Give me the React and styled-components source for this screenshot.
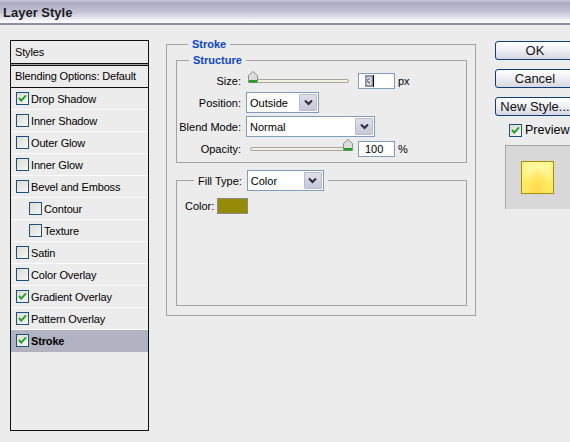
import React from 'react';
import styled, { createGlobalStyle } from 'styled-components';

const GlobalStyle = createGlobalStyle`
  html, body {
    margin: 0;
    padding: 0;
    background: #ececec;
    overflow: hidden;
  }
  body {
    width: 570px;
    height: 442px;
    font-family: "Liberation Sans", Arial, sans-serif;
    font-size: 11px;
    color: #000;
  }
`;

const styles = [
  { label: 'Drop Shadow', checked: true },
  { label: 'Inner Shadow' },
  { label: 'Outer Glow' },
  { label: 'Inner Glow' },
  { label: 'Bevel and Emboss' },
  { label: 'Contour', indent: true },
  { label: 'Texture', indent: true },
  { label: 'Satin' },
  { label: 'Color Overlay' },
  { label: 'Gradient Overlay', checked: true },
  { label: 'Pattern Overlay', checked: true },
  { label: 'Stroke', checked: true, active: true }
];

const Check = ({ checked }) => (
  <Box>
    {checked ? (
      <svg width="11" height="11" viewBox="0 0 11 11">
        <path d="M2 5 L4.3 7.6 L9 2.4" fill="none" stroke="#21a121" strokeWidth="2" />
      </svg>
    ) : null}
  </Box>
);

const Thumb = () => (
  <svg width="10" height="12" viewBox="0 0 10 12">
    <path d="M0.5 11.5 V4.5 L5 0.5 L9.5 4.5 V11.5 Z" fill="#dcdcd8" stroke="#8a8f8a" />
    <rect x="1" y="9" width="8" height="2.5" fill="#21a121" />
  </svg>
);

const Slider = ({ value }) => (
  <SliderTrack>
    <ThumbHolder style={{ left: `${value * 0.95}px` }}>
      <Thumb />
    </ThumbHolder>
  </SliderTrack>
);

const Chevron = () => (
  <svg width="9" height="7" viewBox="0 0 9 7">
    <path d="M1 1.5 L4.5 5 L8 1.5" fill="none" stroke="#2a2a40" strokeWidth="2" />
  </svg>
);

const Select = ({ value, width }) => (
  <SelectBox $width={width}>
    <SelectValue>{value}</SelectValue>
    <SelectButton>
      <Chevron />
    </SelectButton>
  </SelectBox>
);

const App = () => (
  <>
    <GlobalStyle />
    <TitleBar>Layer Style</TitleBar>
    <Body>
      <StylesPanel>
        <PanelHeader>Styles</PanelHeader>
        <BlendRow>Blending Options: Default</BlendRow>
        {styles.map(({ label, checked, indent, active }) => (
          <StyleRow key={label} $indent={indent} $active={active}>
            <Check checked={checked} />
            <span>{label}</span>
          </StyleRow>
        ))}
      </StylesPanel>

      <Middle>
        <Group>
          <Legend>Stroke</Legend>
          <Group $inner>
            <Legend>Structure</Legend>
            <FormGrid>
              <Label>Size:</Label>
              <Line>
                <Slider value={0} />
                <NumberBox>
                  <Selected>3</Selected>
                  <Caret />
                </NumberBox>
                <Unit>px</Unit>
              </Line>

              <Label>Position:</Label>
              <Line>
                <Select value="Outside" width={73} />
              </Line>

              <Label>Blend Mode:</Label>
              <Line>
                <Select value="Normal" width={129} />
              </Line>

              <Label>Opacity:</Label>
              <Line>
                <Slider value={100} />
                <NumberBox>100</NumberBox>
                <Unit>%</Unit>
              </Line>
            </FormGrid>
          </Group>

          <FillGroup>
            <FillLegend>
              <span>Fill Type:</span>
              <Select value="Color" width={77} />
            </FillLegend>
            <ColorRow>
              <span>Color:</span>
              <Swatch $color="#968b06" />
            </ColorRow>
          </FillGroup>
        </Group>
      </Middle>

      <Side>
        <Button>OK</Button>
        <Button>Cancel</Button>
        <Button>New Style...</Button>
        <PreviewToggle>
          <Check checked />
          <span>Preview</span>
        </PreviewToggle>
        <PreviewPane>
          <PreviewTile />
        </PreviewPane>
      </Side>
    </Body>
  </>
);

export default App;

const TitleBar = styled.div`
  height: 25px;
  box-sizing: border-box;
  padding: 5px 0 0 3px;
  font-size: 13px;
  font-weight: bold;
  color: #1c1c1c;
  background: linear-gradient(to bottom, #c9c9d9 0px, #a9a9c4 3px, #c4c4d6 12px, #f6f6fa 21px, #ffffff 23px);
  border-bottom: 2px solid #8d8dab;
`;

const Body = styled.div`
  display: flex;
  align-items: flex-start;
  padding: 15px 0 0 10px;

  & > * {
    flex: none;
  }
`;

const StylesPanel = styled.div`
  width: 137px;
  height: 389px;
  border: 1px solid #111;
  display: flex;
  flex-direction: column;
  letter-spacing: -0.15px;
`;

const PanelHeader = styled.div`
  height: 22px;
  line-height: 22px;
  padding-left: 4px;
  border-bottom: 1px solid #111;
  box-shadow: 0 1px 0 #a4a4a4, 0 2px 0 #111;
  margin-bottom: 2px;
`;

const BlendRow = styled.div`
  height: 21px;
  line-height: 21px;
  padding-left: 4px;
  border-bottom: 1px solid #111;
`;

const StyleRow = styled.div`
  height: 21px;
  display: flex;
  align-items: center;
  gap: 2px;
  padding-left: ${({ $indent }) => ($indent ? 18 : 5)}px;
  border-bottom: 1px solid ${({ $active }) => ($active ? '#b1b3c1' : '#fbfbfb')};
  background: ${({ $active }) => ($active ? '#b1b3c1' : 'transparent')};
  font-weight: ${({ $active }) => ($active ? 'bold' : 'normal')};
`;

const Box = styled.span`
  width: 11px;
  height: 11px;
  flex: none;
  border: 1px solid #1c5180;
  background: linear-gradient(135deg, #dcdcd4, #f6f6f2);
  display: inline-flex;
  align-items: center;
  justify-content: center;
`;

const Middle = styled.div`
  width: 310px;
  margin: -3px 0 0 17px;
`;

const Group = styled.fieldset`
  margin: ${({ $inner }) => ($inner ? '2px 0 0 0' : '0')};
  padding: ${({ $inner }) => ($inner ? '5px 0 5px 0' : '0 8px 9px 9px')};
  border: 1px solid #a2a2a2;
  min-width: 0;
`;

const Legend = styled.legend`
  margin-left: 12px;
  padding: 0 4px;
  font-weight: bold;
  color: #0a46d0;
  line-height: 14px;
`;

const FormGrid = styled.div`
  display: grid;
  grid-template-columns: 64px 1fr;
  grid-template-rows: 17px 21px 21px 17px;
  column-gap: 5px;
  row-gap: 3px;
`;

const Label = styled.div`
  text-align: right;
  align-self: center;
  white-space: nowrap;
`;

const Line = styled.div`
  display: flex;
  align-items: center;
`;

const SliderTrack = styled.div`
  position: relative;
  width: 97px;
  height: 2px;
  margin: 0 9px 0 4px;
  background: #f3f1e4;
  border: 1px solid #a6a6a0;
  border-radius: 2px;
`;

const ThumbHolder = styled.span`
  position: absolute;
  top: -9px;
  margin-left: -3px;
  display: block;
  line-height: 0;
`;

const NumberBox = styled.div`
  width: 37px;
  height: 16px;
  box-sizing: border-box;
  border: 1px solid #7f9db9;
  background: #fff;
  padding-left: 6px;
  display: flex;
  align-items: center;
`;

const Selected = styled.span`
  background: #8f8fa8;
  color: #fff;
  line-height: 12px;
  padding: 0 1px;
`;

const Caret = styled.span`
  width: 1px;
  height: 12px;
  background: #000;
`;

const Unit = styled.span`
  margin-left: 3px;
`;

const SelectBox = styled.div`
  width: ${({ $width }) => $width}px;
  height: 21px;
  box-sizing: border-box;
  border: 1px solid #7f9db9;
  background: #fff;
  display: flex;
  align-items: stretch;
`;

const SelectValue = styled.div`
  flex: 1;
  padding-left: 3px;
  display: flex;
  align-items: center;
  font-size: 11px;
`;

const SelectButton = styled.div`
  width: 16px;
  margin: 1px;
  border: 1px solid #b8bccc;
  border-radius: 1px;
  background: linear-gradient(to bottom, #e0e0ea, #c6c8d8);
  display: flex;
  align-items: center;
  justify-content: center;
`;

const FillGroup = styled.fieldset`
  margin: 7px 0 0 0;
  padding: 7px 0 0 8px;
  height: 136px;
  box-sizing: border-box;
  border: 1px solid #a2a2a2;
  min-width: 0;
`;

const FillLegend = styled.legend`
  margin-left: 9px;
  padding: 0 4px;
  display: flex;
  align-items: center;
  gap: 5px;
`;

const ColorRow = styled.div`
  display: flex;
  align-items: center;
  gap: 3px;
`;

const Swatch = styled.div`
  width: 29px;
  height: 14px;
  border: 1px solid #8a8a8a;
  background: ${({ $color }) => $color};
`;

const Side = styled.div`
  margin-left: 19px;
  margin-top: 1px;
  display: flex;
  flex-direction: column;
  align-items: flex-start;
`;

const Button = styled.div`
  width: 80px;
  height: 19px;
  box-sizing: border-box;
  margin-bottom: 9px;
  border: 1px solid #0f3d73;
  border-radius: 3px;
  background: linear-gradient(to bottom, #ffffff, #f2f2f6 40%, #d6d7e2);
  font-size: 13px;
  line-height: 17px;
  text-align: center;
  white-space: nowrap;
  color: #111;
`;

const PreviewToggle = styled.div`
  display: flex;
  align-items: center;
  gap: 3px;
  margin: -2px 0 0 14px;
  font-size: 12.5px;
`;

const PreviewPane = styled.div`
  width: 70px;
  height: 64px;
  box-sizing: border-box;
  margin: 8px 0 0 10px;
  background: #d8d8d8;
  border-top: 1px solid #a6a6a6;
  border-left: 1px solid #a6a6a6;
  display: flex;
  align-items: center;
  padding-left: 15px;
`;

const PreviewTile = styled.div`
  width: 31px;
  height: 31px;
  border: 1px solid #a88f00;
  background:
    radial-gradient(ellipse at 50% 100%, #ffd64a 0%, #ffe35c 30%, transparent 60%),
    radial-gradient(ellipse at 30% 20%, #fff9a8 0%, transparent 45%),
    radial-gradient(ellipse at 70% 20%, #fff9a8 0%, transparent 45%),
    linear-gradient(to bottom, #fff36a, #ffe85a);
`;
